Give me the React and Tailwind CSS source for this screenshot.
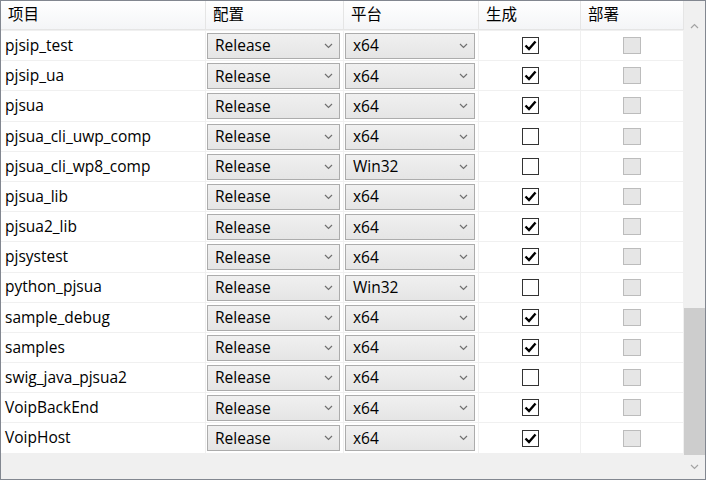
import React from "react";

const rows = [
  ["pjsip_test", "x64", true],
  ["pjsip_ua", "x64", true],
  ["pjsua", "x64", true],
  ["pjsua_cli_uwp_comp", "x64", false],
  ["pjsua_cli_wp8_comp", "Win32", false],
  ["pjsua_lib", "x64", true],
  ["pjsua2_lib", "x64", true],
  ["pjsystest", "x64", true],
  ["python_pjsua", "Win32", false],
  ["sample_debug", "x64", true],
  ["samples", "x64", true],
  ["swig_java_pjsua2", "x64", false],
  ["VoipBackEnd", "x64", true],
  ["VoipHost", "x64", true],
];

const Chevron = ({ up }) => (
  <svg width="9" height="6" viewBox="0 0 9 6" className="block">
    <path
      d={up ? "M1 5 L4.5 1.5 L8 5" : "M1 1 L4.5 4.5 L8 1"}
      fill="none"
      stroke="currentColor"
      strokeWidth="1.2"
    />
  </svg>
);

const Select = ({ value }) => (
  <div className="h-[26px] mt-[2px] ml-[1px] mr-[3px] flex items-center justify-between pl-[7px] pr-[6px] border border-[#acacac] bg-gradient-to-b from-[#f0f0f0] to-[#e5e5e5] text-[#000]">
    <span>{value}</span>
    <span className="text-[#707070]">
      <Chevron />
    </span>
  </div>
);

const Check = ({ checked }) => (
  <div className="w-[17px] h-[17px] border border-[#333333] bg-white flex items-center justify-center">
    {checked && (
      <svg width="13" height="11" viewBox="0 0 13 11">
        <path d="M1.5 5.5 L5 9 L11.5 1.5" fill="none" stroke="#000" strokeWidth="2.4" />
      </svg>
    )}
  </div>
);

const Disabled = () => (
  <div className="w-[18px] h-[17px] border border-[#bcbcbc] bg-[#e6e6e6]" />
);

const cols = "grid grid-cols-[204px_137px_134px_101px_102px] gap-x-[1px]";

export default function App() {
  return (
    <div
      className="w-[706px] h-[480px] border border-[#828790] flex bg-[#f0f0f0] text-[15.5px] text-black overflow-hidden"
      style={{ fontFamily: '"Open Sans", "Noto Sans CJK SC", sans-serif' }}
    >
      <div className="w-[683px] flex flex-col">
        <div className={`${cols} h-[29px] border-b border-[#e5e5e5] bg-[#e5e5e5]`}>
          {["项目", "配置", "平台", "生成", "部署"].map((h) => (
            <div key={h} className="bg-gradient-to-b from-white to-[#f4f5f7] pl-[7px] flex items-center">
              {h}
            </div>
          ))}
        </div>
        <div className="flex flex-col gap-y-[1px] pt-[1px]">
          {rows.map(([name, plat, build]) => (
            <div key={name} className={`${cols} h-[29.2px]`}>
              <div className="bg-white pl-[4px] flex items-center">{name}</div>
              <div className="bg-white">
                <Select value="Release" />
              </div>
              <div className="bg-white">
                <Select value={plat} />
              </div>
              <div className="bg-white flex items-center justify-center pl-[2px]">
                <Check checked={build} />
              </div>
              <div className="bg-white flex items-center justify-center">
                <Disabled />
              </div>
            </div>
          ))}
        </div>
      </div>
      <div className="flex-1 flex flex-col items-center bg-[#f0f0f0] text-[#a3a3a3]">
        <div className="h-[30px] flex items-end pb-[2px] w-full justify-center">
          <Chevron up />
        </div>
        <div className="flex-1 w-full flex flex-col">
          <div className="h-[277px]" />
          <div className="flex-1 bg-[#cdcdcd]" />
        </div>
        <div className="h-[24px] flex items-center justify-center w-full">
          <Chevron />
        </div>
      </div>
    </div>
  );
}
